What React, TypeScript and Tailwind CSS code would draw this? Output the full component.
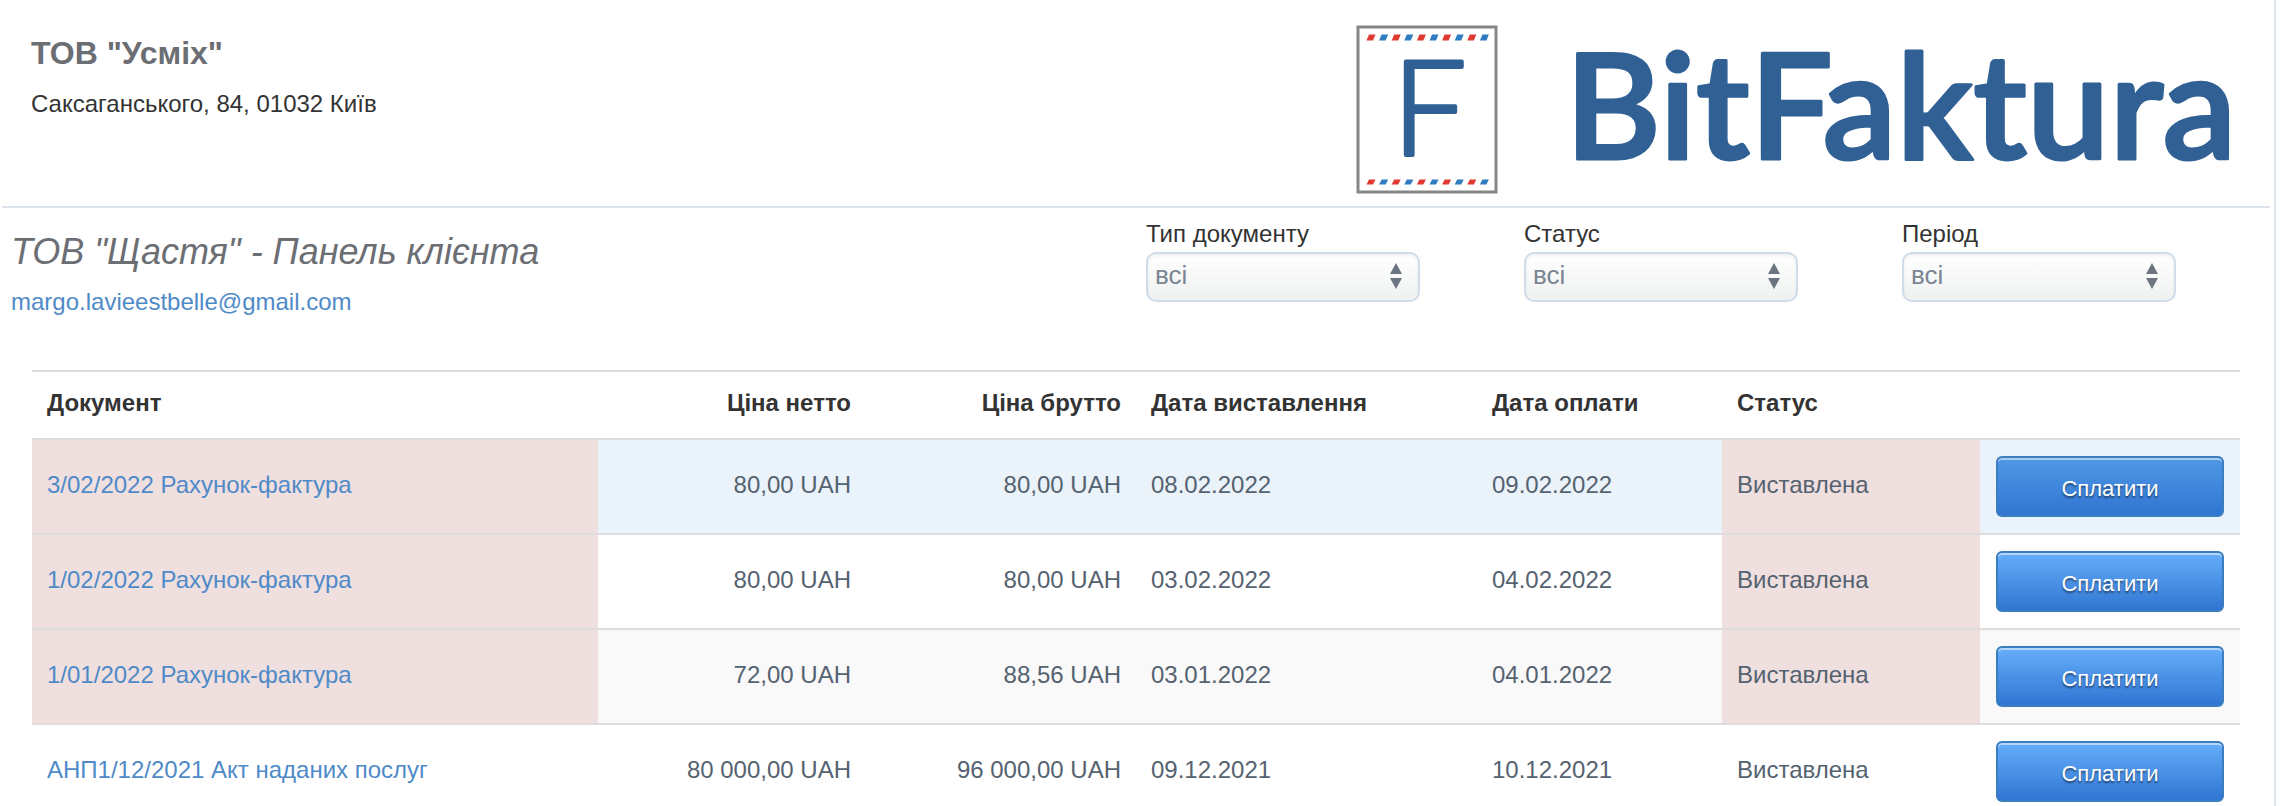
import { useState } from 'react';

interface Invoice {
  id: number;
  document: string;
  net: string;
  gross: string;
  issued: string;
  due: string;
  status: string;
  overdue: boolean;
  rowClass: string;
  buttonClass: string;
}

const payButton = 'from-[#66aefb] to-[#3076d2]';
const payButtonActive = 'from-[#5198e6] to-[#3076d2]';

const invoices: Invoice[] = [
  { id: 1, document: '3/02/2022 Рахунок-фактура', net: '80,00 UAH', gross: '80,00 UAH', issued: '08.02.2022', due: '09.02.2022', status: 'Виставлена', overdue: true, rowClass: 'bg-[#eaf2fa]', buttonClass: payButtonActive },
  { id: 2, document: '1/02/2022 Рахунок-фактура', net: '80,00 UAH', gross: '80,00 UAH', issued: '03.02.2022', due: '04.02.2022', status: 'Виставлена', overdue: true, rowClass: 'bg-white', buttonClass: payButton },
  { id: 3, document: '1/01/2022 Рахунок-фактура', net: '72,00 UAH', gross: '88,56 UAH', issued: '03.01.2022', due: '04.01.2022', status: 'Виставлена', overdue: true, rowClass: 'bg-[#f9f9f9]', buttonClass: payButton },
  { id: 4, document: 'АНП1/12/2021 Акт наданих послуг', net: '80 000,00 UAH', gross: '96 000,00 UAH', issued: '09.12.2021', due: '10.12.2021', status: 'Виставлена', overdue: false, rowClass: 'bg-white', buttonClass: payButton },
];

const filters = [
  { id: 'kind', label: 'Тип документу' },
  { id: 'status', label: 'Статус' },
  { id: 'period', label: 'Період' },
];

const cell = 'border-t-2 border-[#ddd] px-[15px] pb-1';

function Logo() {
  const stamps = Array.from({ length: 10 }, (_, i) => i);

  return (
    <svg className="w-[880px] h-[170px] shrink-0 overflow-visible" viewBox="0 0 880 170" role="img" aria-label="BitFaktura">
      <rect x="2" y="2" width="138" height="165" fill="#fff" stroke="#868686" strokeWidth="3" />
      {/* Airmail stripes along the top and bottom edge */}
      {stamps.map((i) => (
        <g key={i} transform={`translate(${10.5 + i * 12.6} 0)`} fill={i % 2 ? '#2f7cc0' : '#de3a32'}>
          <path d="M2.500 9.500h6.500l-2.500 6h-6.500z" />
          <path d="M2.500 154.500h6.500l-2.500 5h-6.500z" />
        </g>
      ))}
      <g fill="#306094" stroke="#306094" strokeLinejoin="round" fontFamily="Lato, sans-serif">
        <text x="36" y="130" fontSize="132" fontWeight="300" strokeWidth="4">F</text>
        <text x="209" y="134" fontSize="147" fontWeight="600" strokeWidth="3">BitFaktura</text>
      </g>
    </svg>
  );
}

function FilterSelect({ id, label }: { id: string; label: string }) {
  const [value, setValue] = useState('all');

  return (
    <div className="w-[274px]">
      <label htmlFor={id} className="block leading-7 mb-1 text-[#333]">{label}</label>
      <div className="relative">
        <select
          id={id}
          value={value}
          onChange={e => setValue(e.target.value)}
          className="block w-full h-[50px] pl-[7px] pb-1 appearance-none rounded-[10px] border-2 border-[#d0dcea] bg-linear-to-b from-white to-[#eff1f1] text-[26px] text-[#7b8593] shadow-[inset_0_2px_3px_rgba(0,0,0,0.06)]"
        >
          <option value="all">всі</option>
        </select>
        <svg className="absolute right-[18px] top-[11px] w-3 h-[26px] pointer-events-none" viewBox="0 0 12 26" fill="#6b7480">
          <path d="M6 0l6 11H0z" />
          <path d="M0 15h12L6 26z" />
        </svg>
      </div>
    </div>
  );
}

export default function App() {
  return (
    <div className="h-screen overflow-hidden bg-white pr-2 font-['Liberation_Sans',Arial,sans-serif] text-2xl">
      <div className="min-h-full border-r-2 border-[#dce2e9]">
        <header className="ml-0.5 mr-1 h-[208px] border-b-2 border-[#dce2e9] flex justify-between pl-[29px] pr-[34px]">
          <div className="pt-[33px]">
            <h1 className="text-[32px] leading-10 font-bold text-[#6b6e73]">ТОВ "Усміх"</h1>
            <p className="mt-[17px] leading-7 text-[#333]">Саксаганського, 84, 01032 Київ</p>
          </div>
          <div className="pt-[25px]">
            <Logo />
          </div>
        </header>

        <section className="flex justify-between pl-[11px] pr-[98px] pt-3">
          <div className="pt-3">
            <h2 className="text-4xl leading-10 italic text-[#6b6e73]">ТОВ "Щастя" - Панель клієнта</h2>
            <a href="mailto:margo.lavieestbelle@gmail.com" className="block mt-4 leading-7 text-[#4f8ac8]">
              margo.lavieestbelle@gmail.com
            </a>
          </div>
          <div className="flex gap-[104px]">
            {filters.map((f) => (
              <FilterSelect key={f.id} id={f.id} label={f.label} />
            ))}
          </div>
        </section>

        <div className="mt-[54px] pl-8 pr-[34px]">
          <table className="w-full table-fixed border-separate border-spacing-0 leading-7 text-left text-[#556270]">
            <colgroup>
              <col />
              <col className="w-[268px]" />
              <col className="w-[270px]" />
              <col className="w-[341px]" />
              <col className="w-[245px]" />
              <col className="w-[258px]" />
              <col className="w-[260px]" />
            </colgroup>
            <thead>
              <tr className="h-[68px] text-[#333]">
                <th className={cell}>Документ</th>
                <th className={`${cell} text-right`}>Ціна нетто</th>
                <th className={`${cell} text-right`}>Ціна брутто</th>
                <th className={cell}>Дата виставлення</th>
                <th className={cell}>Дата оплати</th>
                <th className={cell}>Статус</th>
                <th className={cell}></th>
              </tr>
            </thead>
            <tbody>
              {invoices.map((inv) => (
                <tr key={inv.id} className={`h-[95px] ${inv.rowClass}`}>
                  <td className={`${cell} ${inv.overdue ? 'bg-[#efdfde]' : ''}`}>
                    <a href="#" className="text-[#4f8ac8]">{inv.document}</a>
                  </td>
                  <td className={`${cell} text-right`}>{inv.net}</td>
                  <td className={`${cell} text-right`}>{inv.gross}</td>
                  <td className={cell}>{inv.issued}</td>
                  <td className={cell}>{inv.due}</td>
                  <td className={`${cell} ${inv.overdue ? 'bg-[#efdfde]' : ''}`}>{inv.status}</td>
                  <td className="border-t-2 border-[#ddd] px-4">
                    <button
                      type="button"
                      className={`block w-full h-[61px] pt-1 rounded-md border-2 border-[#3c7dbf] bg-linear-to-b ${inv.buttonClass} text-[22px] text-white text-shadow-[0_2px_2px_rgba(0,0,0,0.5)] shadow-[inset_0_2px_0_rgba(255,255,255,0.5)]`}
                    >
                      Сплатити
                    </button>
                  </td>
                </tr>
              ))}
            </tbody>
          </table>
        </div>
      </div>
    </div>
  );
}
